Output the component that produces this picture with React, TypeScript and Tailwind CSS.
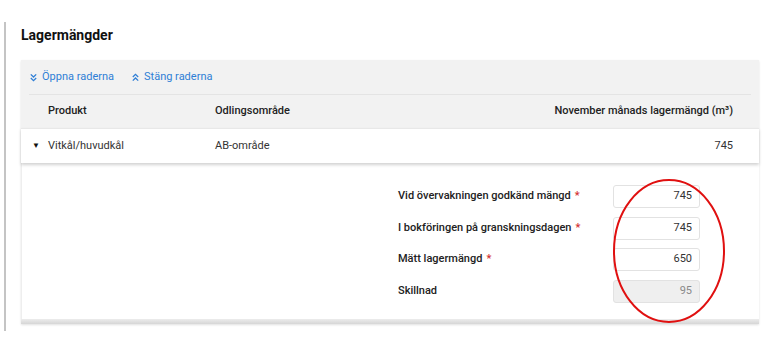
import React from "react";

const ChevronsDown = () => (
    <svg width="9" height="9" viewBox="0 0 10 10" fill="none" stroke="currentColor" strokeWidth="1.4">
        <path d="M2 1.5 L5 4.5 L8 1.5" />
        <path d="M2 5.5 L5 8.5 L8 5.5" />
    </svg>
);

const ChevronsUp = () => (
    <svg width="9" height="9" viewBox="0 0 10 10" fill="none" stroke="currentColor" strokeWidth="1.4">
        <path d="M2 4.5 L5 1.5 L8 4.5" />
        <path d="M2 8.5 L5 5.5 L8 8.5" />
    </svg>
);

interface IFieldProps {
    label: string;
    value: string;
    required?: boolean;
    disabled?: boolean;
}

const Field: React.FC<IFieldProps> = ({ label, value, required, disabled }) => (
    <>
        <div className="flex items-center h-[23px] font-medium text-[#222]">
            {label}
            {required ? <span className="text-[#d32f2f] ml-1">*</span> : null}
        </div>
        <div
            className={(disabled ? "bg-[#efefef] text-[#8a8a8a] " : "bg-white text-[#333] ")
                + "h-[23px] border border-[#e2e2e2] rounded-[3px] flex items-center justify-end pr-[7px]"}
        >
            {value}
        </div>
    </>
);

const App: React.FC = () => {
    return (
        <div className="w-[767px] h-[360px] bg-white font-['Roboto',sans-serif] text-[11px] text-[#333]">
            <div className="pt-[22px]">
                <div className="ml-[4px] border-l-2 border-[#c4c4c4] pl-[15px] pr-[8px] h-[309px] flex flex-col">
                    <h2 className="text-[14px] font-bold text-[#111] mt-[4px] h-[18px] leading-[18px]">
                        Lagermängder
                    </h2>

                    <div className="mt-[16px] relative w-[738px] bg-white shadow-[0_1px_2px_rgba(0,0,0,0.12)]">
                        <div className="bg-[#f2f2f2] px-[8px]">
                            <div className="h-[35px] flex items-center gap-[17px] text-[#2f7fd6] border-b border-[#e4e4e4]">
                                <div className="flex items-center gap-[4px]">
                                    <ChevronsDown />
                                    <span>Öppna raderna</span>
                                </div>
                                <div className="flex items-center gap-[4px]">
                                    <ChevronsUp />
                                    <span>Stäng raderna</span>
                                </div>
                            </div>
                            <div className="h-[33px] flex items-center font-medium text-[#222]">
                                <div className="w-[186px] pl-[19px]">Produkt</div>
                                <div className="flex-1">Odlingsområde</div>
                                <div className="pr-[18px]">November månads lagermängd (m³)</div>
                            </div>
                        </div>

                        <div className="h-[35px] flex items-center px-[8px] bg-white border-t border-[#e8e8e8] shadow-[0_2px_3px_rgba(0,0,0,0.18)] relative">
                            <div className="w-[186px] flex items-center">
                                <span className="w-[19px] pl-[3px] text-[8px] text-[#111]">▼</span>
                                <span>Vitkål/huvudkål</span>
                            </div>
                            <div className="flex-1">AB-område</div>
                            <div className="pr-[18px]">745</div>
                        </div>

                        <div className="border-l border-[#eeeeee] pt-[22px] pb-[16px] flex justify-end pr-[59px]">
                            <div className="grid grid-cols-[215px_87px] gap-y-[8.5px]">
                                <Field label="Vid övervakningen godkänd mängd" value="745" required />
                                <Field label="I bokföringen på granskningsdagen" value="745" required />
                                <Field label="Mätt lagermängd" value="650" required />
                                <Field label="Skillnad" value="95" disabled />
                            </div>
                        </div>
                        <div className="h-[5px] bg-gradient-to-b from-[#ececec] to-[#d6d6d6]" />

                        <svg
                            className="absolute left-[591px] top-[118px] pointer-events-none"
                            width="114"
                            height="146"
                            viewBox="0 0 114 146"
                        >
                            <ellipse cx="57" cy="73" rx="55" ry="71" fill="none" stroke="#e01010" strokeWidth="2" />
                        </svg>
                    </div>
                </div>
            </div>
        </div>
    );
};

export default App;
